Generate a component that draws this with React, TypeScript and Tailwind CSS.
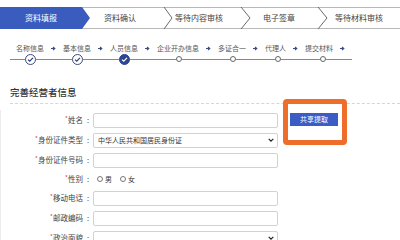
import React from "react";

const topSteps = [
  { label: "资料填报", w: "w-[82px]", active: true },
  { label: "资料确认", w: "w-[76px]" },
  { label: "等待内容审核", w: "w-[82px]" },
  { label: "电子签章", w: "w-[78px]" },
  { label: "等待材料审核", w: "w-[82px]" },
];

const subSteps = ["名称信息", "基本信息", "人员信息", "企业开办信息", "多证合一", "代理人", "提交材料"];

function Arrow() {
  return (
    <svg width="5" height="5" viewBox="0 0 5 5" className="shrink-0">
      <path d="M0 2.5h3.2M2 1l1.8 1.5L2 4" stroke="#3a4b85" strokeWidth="1.1" fill="none" />
    </svg>
  );
}

function Done({ current }: { current?: boolean }) {
  return (
    <div
      className={`w-[11px] h-[11px] rounded-full border flex items-center justify-center shrink-0 ${
        current ? "bg-[#2c4694] border-[#2c4694]" : "bg-white border-[#3d4a78]"
      }`}
    >
      <svg width="7" height="7" viewBox="0 0 7 7">
        <path d="M1 3.6l1.7 1.6L6 1.8" stroke={current ? "#fff" : "#2c3f80"} strokeWidth="1.2" fill="none" />
      </svg>
    </div>
  );
}

function Todo() {
  return <div className="w-[6px] h-[6px] rounded-full border border-[#666] bg-white shrink-0" />;
}

function Line({ w }: { w: string }) {
  return <div className={`${w} h-px bg-[#888]`} />;
}

function Label({ text }: { text: string }) {
  return (
    <div className="w-[91px] pr-[3px] flex justify-end items-center text-[7.5px] text-[#444] leading-none">
      <span className="text-[#e0403a] text-[6px] -translate-y-[1px]">*</span>
      <span>{text}</span>
      <span className="ml-[4px]">:</span>
    </div>
  );
}

function Chevron() {
  return (
    <svg width="6" height="4" viewBox="0 0 6 4" className="ml-auto mr-[3px]">
      <path d="M0.7 0.8L3 3.1L5.3 0.8" stroke="#222" strokeWidth="1.2" fill="none" />
    </svg>
  );
}

function Field({ label, select, value }: { label: string; select?: boolean; value?: string }) {
  return (
    <div className="h-[20px] flex items-center">
      <Label text={label} />
      <div className="ml-[1px] w-[185px] h-[15px] border border-[#d2d2d2] rounded-[2px] bg-white flex items-center pl-[4px] text-[7px] text-[#333] leading-none">
        {value && <span>{value}</span>}
        {select && <Chevron />}
      </div>
    </div>
  );
}

export default function App() {
  return (
    <div className="w-[400px] h-[240px] overflow-hidden bg-white relative font-['Noto_Sans_CJK_SC',sans-serif]">
      {/* top process bar */}
      <div className="mt-[7px] h-[22px] relative">
        <svg width="400" height="22" viewBox="0 0 400 22" className="absolute inset-0">
          <path d="M0 0.5H400M0 21.5H400" stroke="#b8b8b8" strokeWidth="1" />
          <polygon points="0,0 82,0 90,11 82,22 0,22" fill="#3b5cbf" />
          <polyline points="164,0 172,11 164,22" stroke="#6a6a6a" fill="none" />
          <polyline points="241,0 250,11 241,22" stroke="#6a6a6a" fill="none" />
          <polyline points="318,0 327,11 318,22" stroke="#6a6a6a" fill="none" />
        </svg>
        <div className="relative flex h-full items-center text-[8px] leading-none">
          {topSteps.map((s) => (
            <div key={s.label} className={`${s.w} text-center ${s.active ? "text-white" : "text-[#444]"}`}>
              {s.label}
            </div>
          ))}
        </div>
      </div>

      {/* sub steps */}
      <div className="mt-[14px] h-[10px] pl-[16px] flex items-center gap-[7px] text-[7px] text-[#555] leading-none">
        {subSteps.map((s) => (
          <React.Fragment key={s}>
            <span>{s}</span>
            <Arrow />
          </React.Fragment>
        ))}
      </div>
      <div className="h-[12px] pl-[10px] flex items-center">
        <Line w="w-[15px]" />
        <Done />
        <Line w="w-[36px]" />
        <Done />
        <Line w="w-[36px]" />
        <Done current />
        <Line w="w-[46px]" />
        <Todo />
        <Line w="w-[48px]" />
        <Todo />
        <Line w="w-[39px]" />
        <Todo />
        <Line w="w-[39px]" />
        <Todo />
        <Line w="w-[26px]" />
      </div>

      {/* form */}
      <div className="mt-[22px] pl-[10px]">
        <div className="h-[12px] flex items-center text-[9.5px] font-medium text-[#333] leading-none">完善经营者信息</div>
        <div className="mt-[4px] border-t border-dashed border-[#d6d6d6]" />
      </div>
      <div className="mt-[6px] border-l border-[#ececec]">
        <Field label="姓名" />
        <Field label="身份证件类型" select value="中华人民共和国居民身份证" />
        <Field label="身份证件号码" />
        <div className="h-[18px] flex items-center">
          <Label text="性别" />
          <div className="ml-[5px] flex items-center text-[7px] text-[#333] leading-none">
            <span className="w-[6px] h-[6px] rounded-full border border-[#777]" />
            <span className="ml-[2px]">男</span>
            <span className="ml-[8px] w-[6px] h-[6px] rounded-full border border-[#777]" />
            <span className="ml-[2px]">女</span>
          </div>
        </div>
        <Field label="移动电话" />
        <Field label="邮政编码" />
        <Field label="政治面貌" select />
      </div>

      {/* highlighted button annotation */}
      <div className="absolute left-[283px] top-[99px] w-[64px] h-[46px] border-[5px] border-[#ef6d2b] rounded-[4px] bg-white pl-[2px] pt-[9px]">
        <button className="w-[48px] h-[13px] bg-[#3b5cc4] text-white text-[7px] leading-none flex items-center justify-center">
          共享提取
        </button>
      </div>
    </div>
  );
}
